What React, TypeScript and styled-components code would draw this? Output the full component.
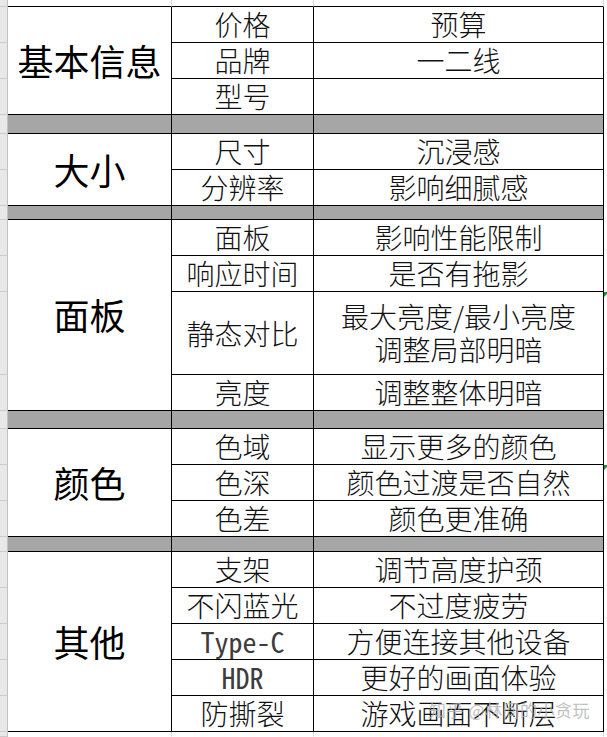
import styled, { createGlobalStyle } from "styled-components";

const GlobalStyle = createGlobalStyle`
    html, body {
        margin: 0;
        padding: 0;
        background: #ffffff;
    }
`;

const COLUMNS = "8px 164px 142px 290px 1fr";
const SONG = `"Noto Sans CJK SC", "Noto Sans", sans-serif`;
const SONG_LATIN = `"Noto Sans Mono CJK SC", "Liberation Mono", monospace`;

interface Item {
    key: string;
    value: string[];
    height?: number;
    latin?: boolean;
    flag?: boolean;
}

interface Group {
    title: string;
    band: number;
    items: Item[];
}

const groups: Group[] = [
    {
        title: "基本信息",
        band: 19,
        items: [
            { key: "价格", value: ["预算"] },
            { key: "品牌", value: ["一二线"] },
            { key: "型号", value: [] },
        ],
    },
    {
        title: "大小",
        band: 14,
        items: [
            { key: "尺寸", value: ["沉浸感"] },
            { key: "分辨率", value: ["影响细腻感"] },
        ],
    },
    {
        title: "面板",
        band: 18,
        items: [
            { key: "面板", value: ["影响性能限制"] },
            { key: "响应时间", value: ["是否有拖影"] },
            { key: "静态对比", value: ["最大亮度/最小亮度", "调整局部明暗"], height: 83, flag: true },
            { key: "亮度", value: ["调整整体明暗"] },
        ],
    },
    {
        title: "颜色",
        band: 15,
        items: [
            { key: "色域", value: ["显示更多的颜色"] },
            { key: "色深", value: ["颜色过渡是否自然"], flag: true },
            { key: "色差", value: ["颜色更准确"] },
        ],
    },
    {
        title: "其他",
        band: 0,
        items: [
            { key: "支架", value: ["调节高度护颈"] },
            { key: "不闪蓝光", value: ["不过度疲劳"] },
            { key: "Type-C", value: ["方便连接其他设备"], latin: true },
            { key: "HDR", value: ["更好的画面体验"], latin: true },
            { key: "防撕裂", value: ["游戏画面不断层"] },
        ],
    },
];

const Sheet = styled.div`
    position: relative;
    display: flex;
    flex-direction: column;
    width: 607px;
    height: 737px;
    overflow: hidden;
    background: #ffffff;
`;

const Block = styled.div<{ $rows: string }>`
    display: grid;
    grid-template-columns: ${COLUMNS};
    grid-template-rows: ${({ $rows }) => $rows};
    box-sizing: border-box;
`;

const Gutter = styled.div`
    grid-column: 1;
    box-sizing: border-box;
    background: #e8e8e8;
    border-right: 1px solid #c2c2c2;
    border-bottom: 1px solid #cbcbcb;
`;

const EdgeCell = styled.div<{ $top?: boolean }>`
    box-sizing: border-box;
    border-right: 1px solid #dadada;
    border-bottom: 1px solid ${({ $top }) => ($top ? "#000000" : "transparent")};
`;

const Spare = styled.div<{ $flag?: boolean }>`
    grid-column: 5;
    background: #ffffff;

    &::before {
        content: "";
        display: ${({ $flag }) => ($flag ? "block" : "none")};
        width: 0;
        height: 0;
        border-top: 5px solid #1f8f3a;
        border-right: 5px solid transparent;
    }
`;

const Category = styled.div`
    grid-column: 2;
    grid-row: 1 / -1;
    display: flex;
    align-items: center;
    justify-content: center;
    box-sizing: border-box;
    border-right: 1px solid #000000;
    border-bottom: 1px solid #000000;
    font-family: "Noto Sans CJK SC", "Noto Sans", sans-serif;
    font-size: 36px;
    font-weight: 400;
    line-height: 40px;
    color: #000000;
    padding-bottom: 2px;
`;

const Cell = styled.div<{ $col: number; $latin?: boolean }>`
    grid-column: ${({ $col }) => $col};
    display: flex;
    flex-direction: column;
    align-items: center;
    justify-content: center;
    box-sizing: border-box;
    border-right: 1px solid #000000;
    border-bottom: 1px solid #000000;
    font-family: ${({ $latin }) => ($latin ? SONG_LATIN : SONG)};
    font-size: 28px;
    font-weight: 300;
    line-height: 33px;
    color: ${({ $latin }) => ($latin ? "#3c3c3c" : "#111111")};
    white-space: nowrap;
`;

const Band = styled.div`
    box-sizing: border-box;
    background: #a6a6a6;
    border-right: 1px solid #000000;
    border-bottom: 1px solid #000000;
`;

const Watermark = styled.div`
    position: absolute;
    right: 17px;
    bottom: 17px;
    font-family: "Noto Sans CJK SC", sans-serif;
    font-size: 17px;
    line-height: 20px;
    color: rgba(175, 175, 175, 0.8);
    letter-spacing: 0.5px;
    pointer-events: none;
`;

function GroupBlock({ group }: { group: Group }) {
    const rows = group.items.map((item) => `${item.height ?? 36}px`).join(" ");
    return (
        <Block $rows={rows}>
            <Category>{group.title}</Category>
            {group.items.map((item) => [
                <Gutter key={`${item.key}-g`} />,
                <Cell key={`${item.key}-k`} $col={3} $latin={item.latin}>
                    {item.key}
                </Cell>,
                <Cell key={`${item.key}-v`} $col={4}>
                    {item.value.map((line) => (
                        <span key={line}>{line}</span>
                    ))}
                </Cell>,
                <Spare key={`${item.key}-s`} $flag={item.flag} />,
            ])}
        </Block>
    );
}

function Separator({ height }: { height: number }) {
    return (
        <Block $rows={`${height}px`}>
            <Gutter />
            <Band />
            <Band />
            <Band />
            <Spare />
        </Block>
    );
}

function Edge({ height, top }: { height: number; top?: boolean }) {
    return (
        <Block $rows={`${height}px`}>
            <Gutter />
            <EdgeCell $top={top} />
            <EdgeCell $top={top} />
            <EdgeCell $top={top} />
            <Spare />
        </Block>
    );
}

export default function App() {
    return (
        <Sheet>
            <GlobalStyle />
            <Edge height={7} top />
            {groups.map((group) => (
                <div key={group.title}>
                    <GroupBlock group={group} />
                    {group.band > 0 && <Separator height={group.band} />}
                </div>
            ))}
            <Edge height={5} />
            <Watermark>知乎 @林间的小贪玩</Watermark>
        </Sheet>
    );
}
